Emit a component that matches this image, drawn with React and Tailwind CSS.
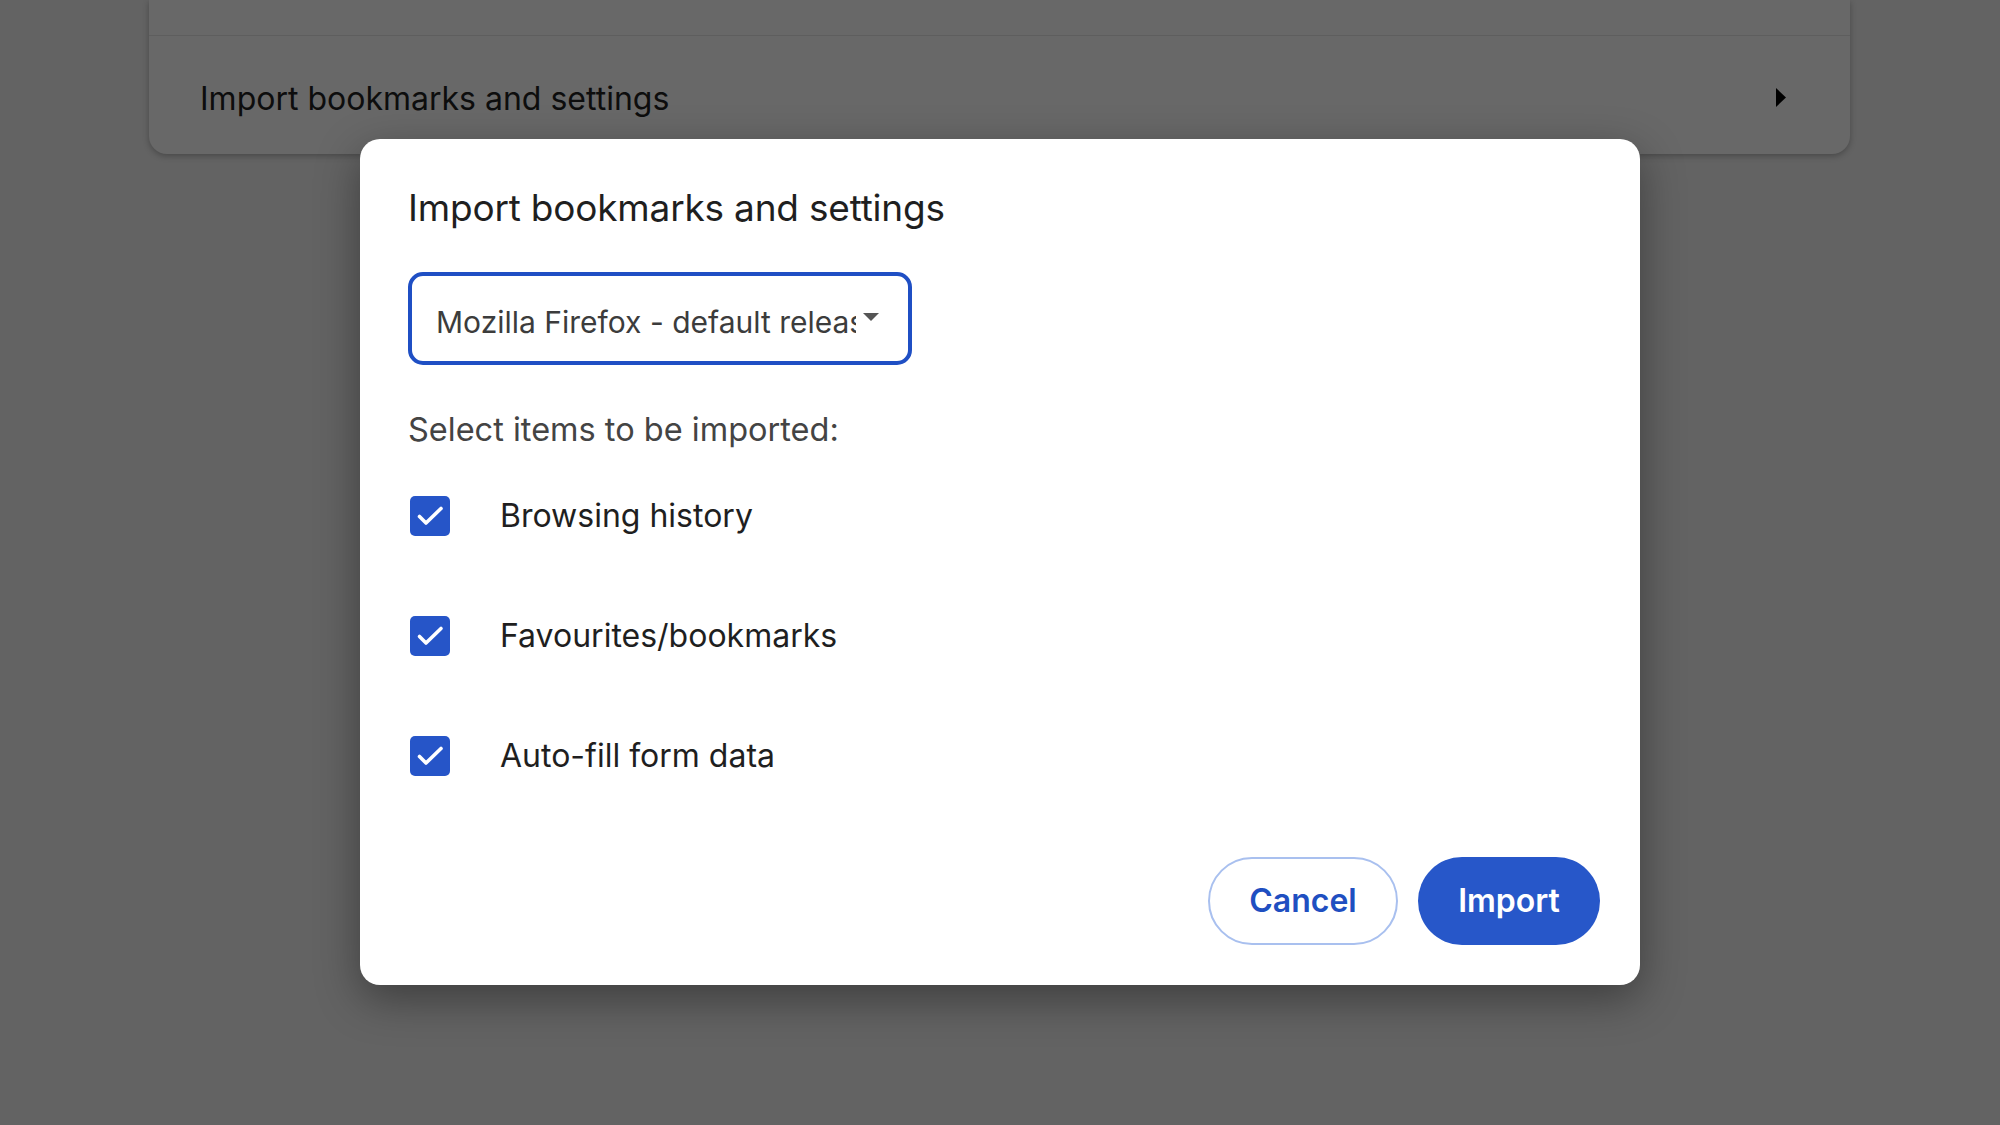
import React from 'react';

const items = ['Browsing history', 'Favourites/bookmarks', 'Auto-fill form data'];

function CheckBox() {
  return (
    <div className="w-[40px] h-[40px] rounded-[5px] bg-[#2655c8] flex items-center justify-center shrink-0">
      <svg width="40" height="40" viewBox="0 0 40 40" fill="none">
        <path d="M9.5 20.5l6.5 6.5L31 12.5" stroke="#fff" strokeWidth="3.6" strokeLinecap="round" strokeLinejoin="round" />
      </svg>
    </div>
  );
}

function ImportDialog() {
  return (
    <div className="absolute left-[360px] top-[139px] w-[1280px] bg-white rounded-[20px] shadow-[0_14px_44px_rgba(0,0,0,0.38)] pl-[48px] pr-[40px] pt-[47px] pb-[40px] font-['Inter',sans-serif]">
      <h2 className="text-[37px] leading-[44px] text-[#1f1f1f] font-normal tracking-[-0.2px]">Import bookmarks and settings</h2>

      <div className="mt-[42px] w-[504px] h-[93px] border-[4px] border-[#1f4fc4] rounded-[15px] flex items-center pl-[24px] pr-[26px]">
        <div className="w-[420px] overflow-hidden whitespace-nowrap text-[30px] leading-[40px] text-[#3c3c3c] pt-[6px]">
          Mozilla Firefox - default releas
        </div>
        <svg width="16" height="8" viewBox="0 0 16 8" className="ml-[7px] -mt-[4px]">
          <path d="M0 0h16L8 8z" fill="#555" />
        </svg>
      </div>

      <p className="mt-[45px] text-[32.5px] leading-[40px] text-[#444]">Select items to be imported:</p>

      <div className="mt-[6px]">
        {items.map(label => (
          <div key={label} className="h-[120px] flex items-center pl-[2px]">
            <CheckBox />
            <span className="ml-[50px] text-[32px] text-[#1f1f1f]">{label}</span>
          </div>
        ))}
      </div>

      <div className="mt-[41px] flex justify-end gap-[20px]">
        <button className="w-[190px] h-[88px] rounded-full border-2 border-[#a9c0ef] text-[#1f4fc1] text-[32px] font-semibold">
          Cancel
        </button>
        <button className="w-[182px] h-[88px] rounded-full bg-[#2757c9] text-white text-[32px] font-semibold">
          Import
        </button>
      </div>
    </div>
  );
}

export default function App() {
  return (
    <div className="relative w-[2000px] h-[1125px] overflow-hidden bg-[#636363] font-['Inter',sans-serif]">
      <div className="ml-[149px] w-[1701px] h-[154px] bg-[#686868] rounded-b-[18px] shadow-[0_2px_6px_rgba(0,0,0,0.28)]">
        <div className="h-[36px] border-b border-[#5e5e5e]" />
        <div className="h-[117px] flex items-center justify-between pl-[51px] pr-[64px]">
          <span className="text-[32px] text-[#0d0d0d] pt-[8px]">Import bookmarks and settings</span>
          <svg width="10" height="19" viewBox="0 0 10 19" className="mt-[6px]">
            <path d="M0 0L10 9.5 0 19z" fill="#000" />
          </svg>
        </div>
      </div>
      <ImportDialog />
    </div>
  );
}
